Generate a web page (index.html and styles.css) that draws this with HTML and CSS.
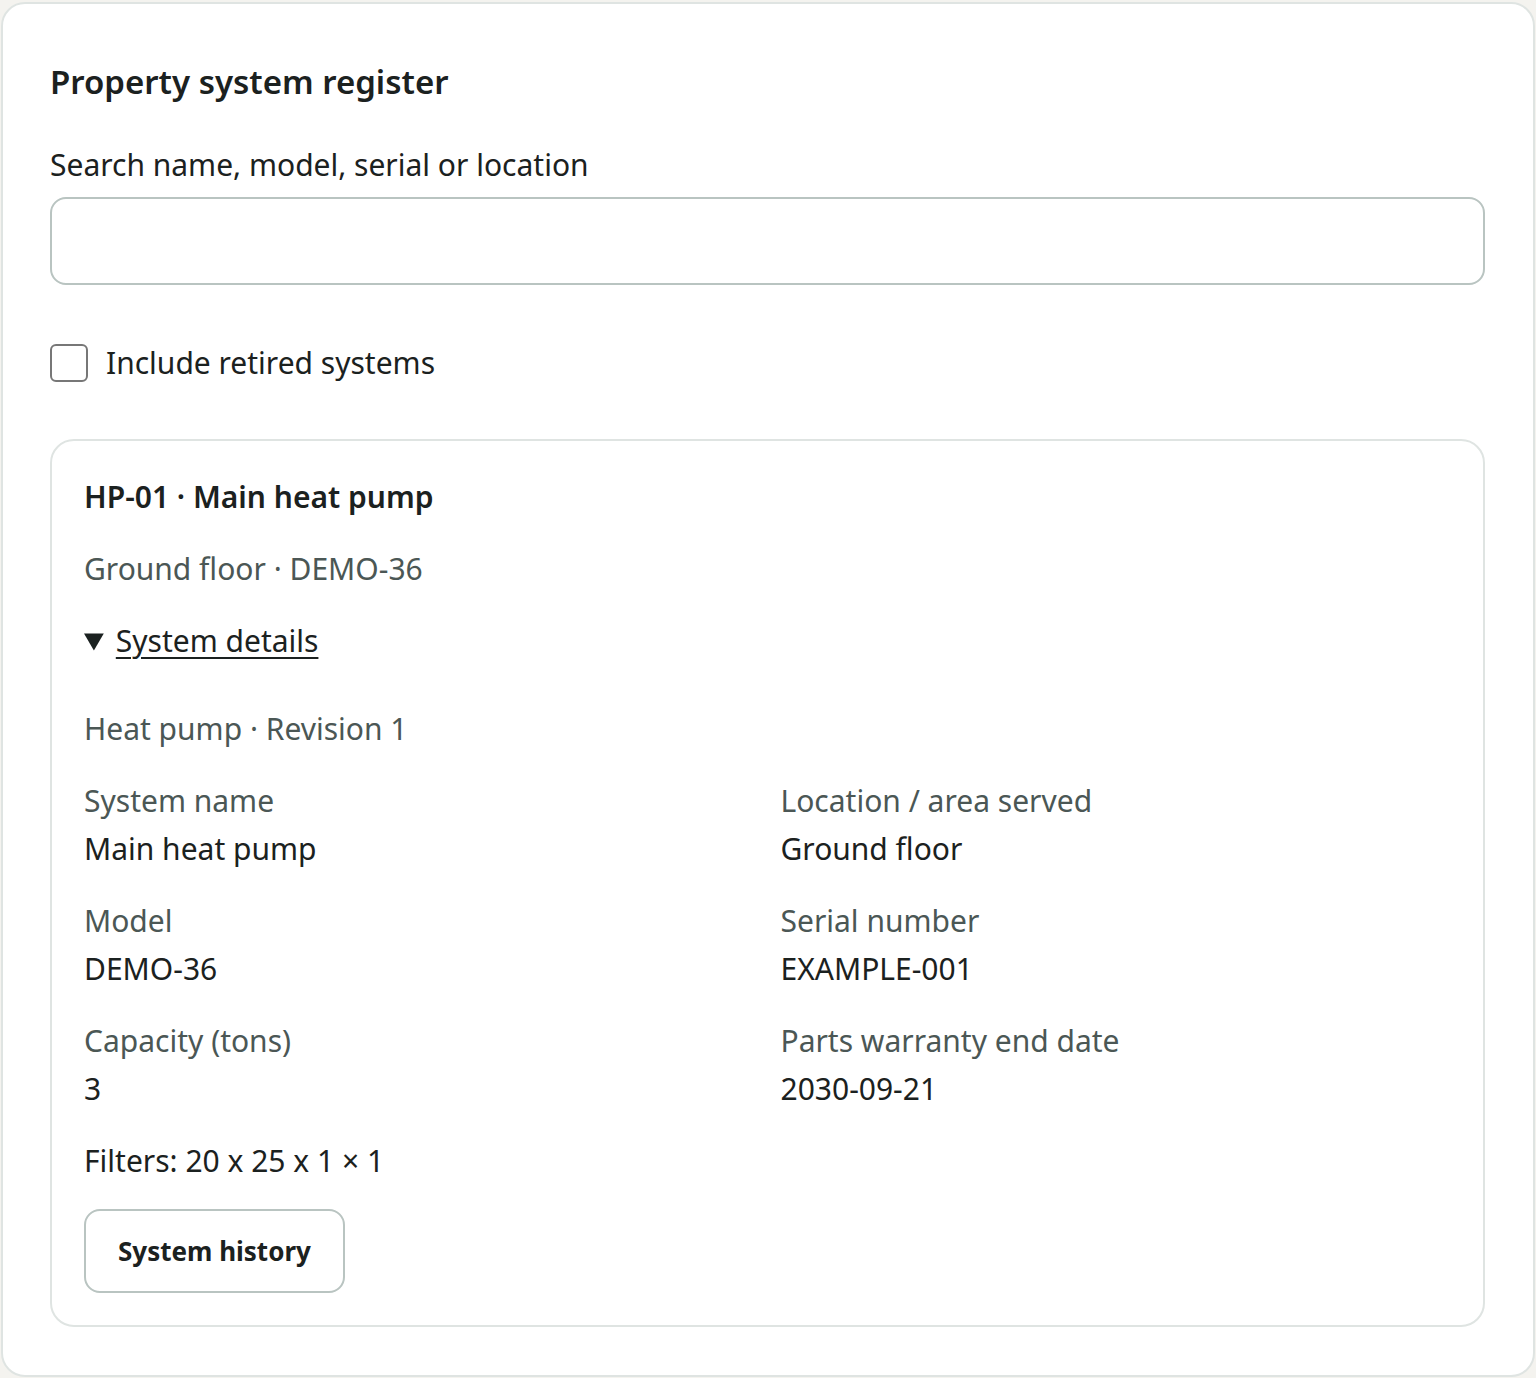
FILE: index.html
```html
<!DOCTYPE html>
<html lang="en">
<head>
<meta charset="utf-8">
<title>Property system register</title>
<link rel="stylesheet" href="styles.css">
</head>
<body>
<main class="panel">
  <h1 class="title">Property system register</h1>
  <div class="field">
    <label class="field-label" for="q">Search name, model, serial or location</label>
    <input class="search" id="q" type="text">
  </div>
  <label class="check-row">
    <input class="check" type="checkbox">
    <span>Include retired systems</span>
  </label>
  <section class="system">
    <h2 class="system-title">HP-01 · Main heat pump</h2>
    <p class="muted">Ground floor · DEMO-36</p>
    <details class="details" open>
      <summary class="summary"><span class="summary-text">System details</span></summary>
      <div class="details-body">
        <p class="muted">Heat pump · Revision 1</p>
        <dl class="specs">
          <div class="spec"><dt>System name</dt><dd>Main heat pump</dd></div>
          <div class="spec"><dt>Location / area served</dt><dd>Ground floor</dd></div>
          <div class="spec"><dt>Model</dt><dd>DEMO-36</dd></div>
          <div class="spec"><dt>Serial number</dt><dd>EXAMPLE-001</dd></div>
          <div class="spec"><dt>Capacity (tons)</dt><dd>3</dd></div>
          <div class="spec"><dt>Parts warranty end date</dt><dd>2030-09-21</dd></div>
        </dl>
        <p class="plain">Filters: 20 x 25 x 1 × 1</p>
        <div class="actions"><button class="btn" type="button">System history</button></div>
      </div>
    </details>
  </section>
</main>
</body>
</html>
```
FILE: styles.css
```css
* { box-sizing: border-box; }
html, body { margin: 0; padding: 0; }
body {
  background: #f4f3ef;
  padding: 2px 1px 0 1px;
  font-family: "Noto Sans", "Open Sans", sans-serif;
  color: #1b2120;
  font-size: 30px;
  line-height: 48px;
}
.panel {
  background: #fff;
  border: 2px solid #dfe4e2;
  border-radius: 24px;
  padding: 48px 48px 48px 47px;
}
.title {
  margin: 8px 0 0;
  font-size: 33px;
  line-height: 44px;
  font-weight: 600;
}
.field { margin-top: 37px; display: flex; flex-direction: column; }
.field-label { display: block; }
.search {
  margin-top: 8px;
  height: 88px;
  width: 100%;
  border: 2px solid #b9c4c1;
  border-radius: 16px;
  background: #fff;
  font: inherit;
  padding: 0 24px;
}
.check-row {
  margin-top: 54px;
  display: flex;
  align-items: center;
  gap: 18px;
  height: 48px;
}
.check {
  appearance: none;
  -webkit-appearance: none;
  margin: 0;
  width: 38px;
  height: 38px;
  border: 2px solid #777;
  border-radius: 6px;
  background: #fff;
}
.system {
  margin-top: 52px;
  border: 2px solid #dfe4e2;
  border-radius: 24px;
  padding: 32px;
  display: flex;
  flex-direction: column;
  gap: 24px;
}
.system-title {
  margin: 0;
  font-size: 30px;
  line-height: 48px;
  font-weight: 600;
}
.muted { margin: 0; color: #4b5755; }
.plain { margin: 0; }
.details { display: block; }
.summary { cursor: pointer; height: 48px; }
.summary-text { text-decoration: underline; text-underline-offset: 5px; text-decoration-thickness: 2px; }
.details-body {
  margin-top: 40px;
  display: flex;
  flex-direction: column;
  gap: 24px;
}
.specs {
  margin: 0;
  display: grid;
  grid-template-columns: 1fr 1fr;
  column-gap: 26px;
  row-gap: 24px;
}
.spec dt { color: #4b5755; }
.spec dd { margin: 0; }
.actions { display: flex; }
.btn {
  height: 84px;
  padding: 0 32px;
  border: 2px solid #b9c4c1;
  border-radius: 16px;
  background: #fff;
  font-family: inherit;
  font-size: 26px;
  font-weight: 700;
  color: #1b2120;
}
```
